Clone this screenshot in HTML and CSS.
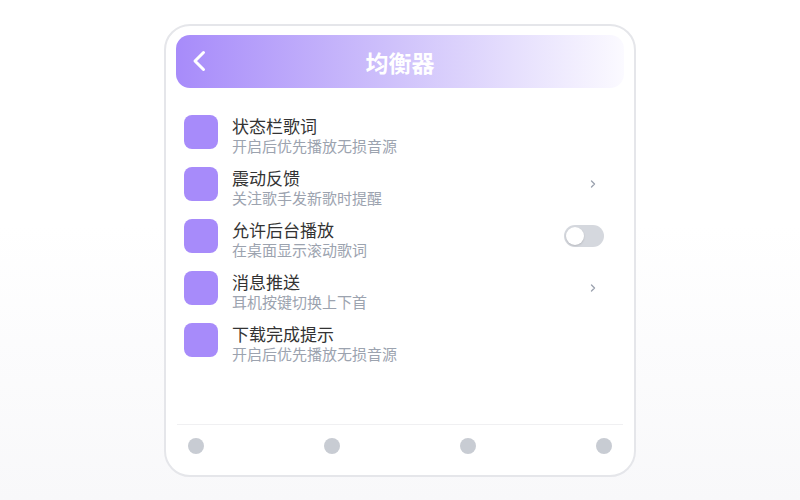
FILE: index.html
```html
<!DOCTYPE html>
<html lang="zh-CN">

<head>
  <meta charset="UTF-8">
  <title>均衡器</title>
  <link rel="stylesheet" href="styles.css">
</head>

<body>

  <div class="phone">
    <header class="topbar">
      <svg class="back" width="16" height="22" viewBox="0 0 16 22">
        <path d="M12.5 2.5 L4 11 L12.5 19.5" fill="none" stroke="#fff" stroke-width="3" stroke-linecap="round" stroke-linejoin="round"/>
      </svg>
      <h1>均衡器</h1>
    </header>

    <ul class="list">
      <li class="item">
        <span class="icon"></span>
        <div class="text">
          <div class="title">状态栏歌词</div>
          <div class="sub">开启后优先播放无损音源</div>
        </div>
      </li>
      <li class="item">
        <span class="icon"></span>
        <div class="text">
          <div class="title">震动反馈</div>
          <div class="sub">关注歌手发新歌时提醒</div>
        </div>
        <span class="extra">
          <svg width="6" height="10" viewBox="0 0 6 10"><path d="M1.5 2 L4.5 5 L1.5 8" fill="none" stroke="#9ca3af" stroke-width="1.4" stroke-linecap="round" stroke-linejoin="round"/></svg>
        </span>
      </li>
      <li class="item">
        <span class="icon"></span>
        <div class="text">
          <div class="title">允许后台播放</div>
          <div class="sub">在桌面显示滚动歌词</div>
        </div>
        <span class="extra">
          <span class="toggle"><span class="knob"></span></span>
        </span>
      </li>
      <li class="item">
        <span class="icon"></span>
        <div class="text">
          <div class="title">消息推送</div>
          <div class="sub">耳机按键切换上下首</div>
        </div>
        <span class="extra">
          <svg width="6" height="10" viewBox="0 0 6 10"><path d="M1.5 2 L4.5 5 L1.5 8" fill="none" stroke="#9ca3af" stroke-width="1.4" stroke-linecap="round" stroke-linejoin="round"/></svg>
        </span>
      </li>
      <li class="item">
        <span class="icon"></span>
        <div class="text">
          <div class="title">下载完成提示</div>
          <div class="sub">开启后优先播放无损音源</div>
        </div>
      </li>
    </ul>

    <nav class="tabs">
      <span class="dot"></span>
      <span class="dot"></span>
      <span class="dot"></span>
      <span class="dot"></span>
    </nav>
  </div>

</body>
</html>
```

FILE: styles.css
```css
html, body {
  height: 100%;
}
body {
  margin: 0;
  font-family: "Noto Sans CJK SC", "Noto Sans", sans-serif;
  background: linear-gradient(#fff 45%, #f8f8fa);
  color: #333;
}
.phone {
  box-sizing: border-box;
  width: 472px;
  height: 453px;
  margin: 24px auto 0;
  padding: 9px 10px 0;
  background: #fff;
  border: 2px solid #e5e6ea;
  border-radius: 26px;
  display: flex;
  flex-direction: column;
}
.topbar {
  height: 53px;
  border-radius: 14px;
  background: linear-gradient(90deg, #a78bfa 0%, #d0c3fb 50%, #fbfaff 100%);
  display: flex;
  align-items: center;
  justify-content: center;
  position: relative;
}
.back {
  position: absolute;
  left: 15px;
  top: 15px;
}
.topbar h1 {
  margin: 0;
  color: #fff;
  font-size: 23px;
  font-weight: 700;
}
.list {
  list-style: none;
  margin: 0;
  padding: 27px 20px 0 8px;
  flex: 1;
  display: flex;
  flex-direction: column;
  gap: 10px;
}
.item {
  display: flex;
  align-items: flex-start;
  height: 42px;
}
.icon {
  width: 34px;
  height: 34px;
  border-radius: 8px;
  background: #a78bfa;
  flex-shrink: 0;
}
.text {
  flex: 1;
  margin-left: 14px;
}
.title {
  font-size: 17px;
  line-height: 21px;
  color: #333;
}
.sub {
  font-size: 15px;
  line-height: 19px;
  color: #9ca3af;
}
.extra {
  height: 34px;
  display: flex;
  align-items: center;
}
.extra svg {
  margin-right: 8px;
}
.toggle {
  width: 40px;
  height: 22px;
  border-radius: 11px;
  background: #d5d8de;
  display: flex;
  align-items: center;
  padding: 0 2px;
  box-sizing: border-box;
}
.knob {
  width: 18px;
  height: 18px;
  border-radius: 50%;
  background: #fff;
  box-shadow: 0 1px 2px rgba(0,0,0,0.15);
}
.tabs {
  border-top: 1px solid #f0f0f2;
  margin: 0 1px;
  padding: 13px 11px 21px;
  display: flex;
  justify-content: space-between;
}
.dot {
  width: 16px;
  height: 16px;
  border-radius: 50%;
  background: #c8ccd3;
}
```
